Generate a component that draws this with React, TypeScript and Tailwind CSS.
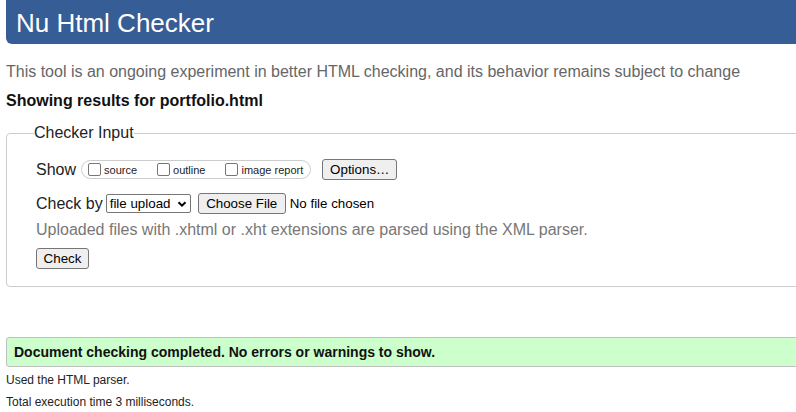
import React from 'react';

const font = "font-['Liberation_Sans',Arial,sans-serif]";
const btn =
  'h-[21px] px-[6px] bg-[#efefef] border border-[#767676] rounded-[3px] text-[13.33px] leading-none text-black flex items-center';

function Box({ label }: { label: string }) {
  return (
    <label className="flex items-center gap-[3px]">
      <span className="w-[13px] h-[13px] border border-[#767676] rounded-[2px] bg-white" />
      <span className="text-[11px] leading-none text-[#222] mt-[2px]">{label}</span>
    </label>
  );
}

export default function App() {
  return (
    <div className={`w-[796px] h-[412px] overflow-hidden bg-white ${font}`}>
      <div className="w-[840px] pl-[6px]">
        {/* header */}
        <div className="h-[44px] bg-[#365d95] rounded-bl-[6px] flex items-center pl-[10px]">
          <h1 className="text-[26px] leading-none text-white mt-[1px]">Nu Html Checker</h1>
        </div>

        <p className="mt-[19px] text-[16px] leading-[18px] text-[#666]">
          This tool is an ongoing experiment in better HTML checking, and its behavior remains subject to change
        </p>
        <p className="mt-[11px] text-[16px] leading-[18px] font-bold text-[#111]">
          Showing results for portfolio.html
        </p>

        {/* Checker Input */}
        <fieldset className="mt-[13px] border border-[#ccc] rounded-[4px] pl-[29px] pb-[17px]">
          <legend className="text-[16px] leading-[20px] text-[#222] -ml-[2px]">Checker Input</legend>

          <div className="mt-[15px] flex items-center h-[23px]">
            <span className="text-[16px] leading-none text-[#222]">Show</span>
            <div className="ml-[5px] h-[19px] border border-[#ccc] rounded-full flex items-center pl-[6px] pr-[7px] gap-[20px]">
              <Box label="source" />
              <Box label="outline" />
              <Box label="image report" />
            </div>
            <button className={`${btn} ml-[11px] w-[75px] justify-center`}>Options…</button>
          </div>

          <div className="mt-[11px] flex items-center h-[23px]">
            <span className="text-[16px] leading-none text-[#222]">Check by</span>
            <div className="ml-[3px] w-[85px] h-[19px] border border-[#767676] rounded-[2px] flex items-center justify-between pl-[3px] pr-[3px] text-[13.33px] text-black">
              <span>file upload</span>
              <svg width="10" height="10" viewBox="0 0 10 10">
                <path d="M1.5 3.2 L5 6.7 L8.5 3.2" fill="none" stroke="#000" strokeWidth="2" />
              </svg>
            </div>
            <button className={`${btn} ml-[7px] w-[88px] justify-center`}>Choose File</button>
            <span className="ml-[4px] text-[13.33px] text-black">No file chosen</span>
          </div>

          <p className="mt-[6px] text-[16px] leading-[18px] text-[#777]">
            Uploaded files with .xhtml or .xht extensions are parsed using the XML parser.
          </p>

          <button className={`${btn} mt-[9px] w-[53px] justify-center`}>Check</button>
        </fieldset>

        {/* result */}
        <div className="mt-[50px] h-[30px] bg-[#ccffcc] border border-[#c0c0c0] rounded-l-[3px] flex items-center pl-[7px]">
          <span className="text-[14px] font-bold text-[#111]">
            Document checking completed. No errors or warnings to show.
          </span>
        </div>
        <p className="mt-[6px] text-[12px] leading-[14px] text-[#222]">Used the HTML parser.</p>
        <p className="mt-[8px] text-[12px] leading-[14px] text-[#222]">Total execution time 3 milliseconds.</p>
      </div>
    </div>
  );
}
